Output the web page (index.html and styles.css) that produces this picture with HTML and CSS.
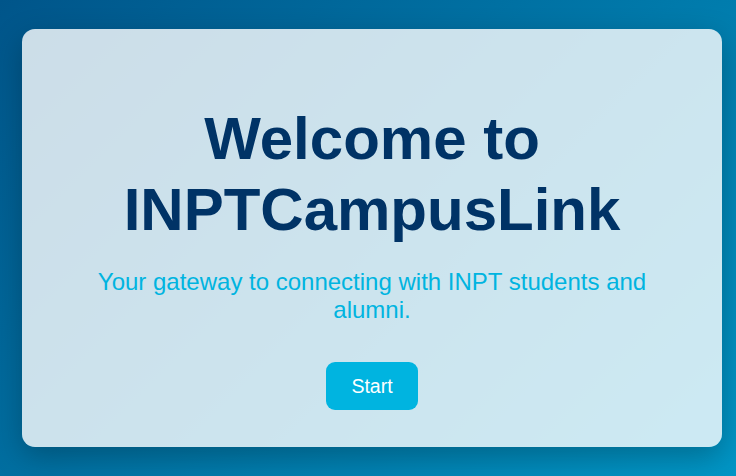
FILE: index.html
```html
<!DOCTYPE html>
<html lang="en">
<head>
<meta charset="utf-8">
<title>INPTCampusLink</title>
<link rel="stylesheet" href="styles.css">
</head>
<body>
  <main class="card">
    <h1 class="title">Welcome to INPTCampusLink</h1>
    <p class="subtitle">Your gateway to connecting with INPT students and alumni.</p>
    <button class="start-btn" type="button">Start</button>
  </main>
</body>
</html>
```
FILE: styles.css
```css
html, body {
  height: 100%;
}
body {
  margin: 0;
  padding: 0 14px 0 22px;
  box-sizing: border-box;
  min-height: 100vh;
  display: flex;
  align-items: center;
  justify-content: center;
  font-family: "Liberation Sans", Arial, sans-serif;
  background: linear-gradient(135deg, #00558a 0%, #0079aa 55%, #0096c6 100%);
  overflow: hidden;
}
.card {
  width: 700px;
  height: 418px;
  box-sizing: border-box;
  padding: 74px 40px 0;
  display: flex;
  flex-direction: column;
  align-items: center;
  text-align: center;
  background: rgba(255, 255, 255, 0.8);
  border-radius: 13px;
  box-shadow: 0 10px 30px rgba(0, 0, 0, 0.25);
}
.title {
  margin: 0;
  font-size: 60px;
  line-height: 71px;
  font-weight: 700;
  color: #003366;
}
.subtitle {
  margin: 23px 0 0;
  font-size: 24px;
  line-height: 27.6px;
  color: #00b4e0;
}
.start-btn {
  margin-top: 39px;
  width: 92px;
  height: 48px;
  border: none;
  border-radius: 9px;
  background: #00b4e0;
  color: #ffffff;
  font-family: "Liberation Sans", Arial, sans-serif;
  font-size: 19.5px;
  cursor: pointer;
}
```
